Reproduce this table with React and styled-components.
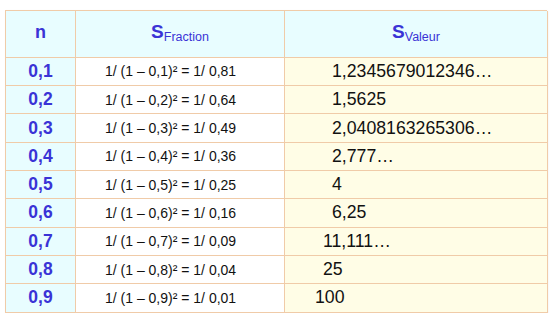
import React from "react";
import styled, { createGlobalStyle } from "styled-components";

const Global = createGlobalStyle`
  html, body { margin: 0; padding: 0; background: #ffffff; }
  body { font-family: "Liberation Sans", Arial, sans-serif; }
`;

const Page = styled.div`
  padding: 10px 0 0 5px;
`;

const Table = styled.div`
  display: grid;
  grid-template-columns: 70px 209px 263px;
  grid-template-rows: 46.7px repeat(9, 28.33px);
  width: 542px;
  box-sizing: border-box;
  border-top: 1px solid #f0cba8;
  border-left: 1px solid #f0cba8;
  box-shadow: 1px 1px 2px rgba(0, 0, 0, 0.08);
`;

const Cell = styled.div`
  box-sizing: border-box;
  border-right: 1px solid #f0cba8;
  border-bottom: 1px solid #f0cba8;
  display: flex;
  align-items: center;
  white-space: nowrap;
`;

const HeadCell = styled(Cell)`
  background: #e8fdff;
  justify-content: center;
  color: #3a33d6;
  font-weight: bold;
  padding-bottom: 3px;
`;

const HeadN = styled.span`
  font-size: 18px;
`;

const HeadS = styled.span`
  font-size: 19px;
  font-weight: bold;
`;

const Sub = styled.span`
  font-size: 12.5px;
  font-weight: normal;
  position: relative;
  top: 5px;
`;

const NCell = styled(Cell)`
  background: #e8fdff;
  justify-content: center;
  color: #3a33d6;
  font-weight: bold;
  font-size: 17.5px;
`;

const FracCell = styled(Cell)`
  background: #ffffff;
  padding-left: 29px;
  font-size: 14px;
  color: #111111;
`;

const ValCell = styled(Cell)`
  background: #fffde6;
  padding-left: ${(p) => p.$indent}px;
  font-size: 17.7px;
  color: #111111;
`;

const rows = [
  { n: "0,1", d: "0,81", v: "1,2345679012346…", i: 47 },
  { n: "0,2", d: "0,64", v: "1,5625", i: 47 },
  { n: "0,3", d: "0,49", v: "2,0408163265306…", i: 47 },
  { n: "0,4", d: "0,36", v: "2,777…", i: 47 },
  { n: "0,5", d: "0,25", v: "4", i: 47 },
  { n: "0,6", d: "0,16", v: "6,25", i: 47 },
  { n: "0,7", d: "0,09", v: "11,111…", i: 38 },
  { n: "0,8", d: "0,04", v: "25", i: 38 },
  { n: "0,9", d: "0,01", v: "100", i: 30 },
];

export default function App() {
  return (
    <>
      <Global />
      <Page>
        <Table>
          <HeadCell>
            <HeadN>n</HeadN>
          </HeadCell>
          <HeadCell>
            <HeadS>S</HeadS>
            <Sub>Fraction</Sub>
          </HeadCell>
          <HeadCell>
            <HeadS>S</HeadS>
            <Sub>Valeur</Sub>
          </HeadCell>
          {rows.map((r) => (
            <React.Fragment key={r.n}>
              <NCell>{r.n}</NCell>
              <FracCell>
                {`1/ (1 – ${r.n})² = 1/ ${r.d}`}
              </FracCell>
              <ValCell $indent={r.i}>{r.v}</ValCell>
            </React.Fragment>
          ))}
        </Table>
      </Page>
    </>
  );
}
